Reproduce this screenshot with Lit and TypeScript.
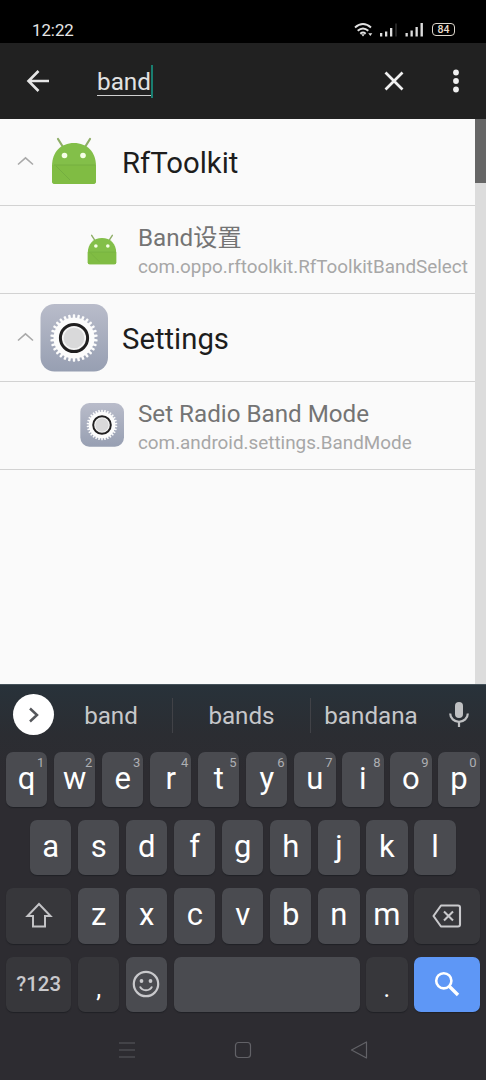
import { LitElement, html, svg, css } from "lit";
import { customElement, property } from "lit/decorators.js";

const robot = html`<svg viewBox="0 0 46 48" width="100%" height="100%">
  <g stroke="#8fae68" stroke-width="2.2" stroke-linecap="round">
    <path d="M7 2l5 8M39 2l-5 8" />
  </g>
  <path d="M1 29C1 15 10 6 23 6s22 9 22 23v15a3 3 0 0 1-3 3H4a3 3 0 0 1-3-3z" fill="#83bf49" />
  <path d="M1 28h44v16a3 3 0 0 1-3 3H4a3 3 0 0 1-3-3z" fill="#80bc43" />
  <path d="M3 28h41M5 29l14 14" stroke="#74ae40" stroke-width="1" fill="none" />
  <circle cx="13.5" cy="18.5" r="2.8" fill="#f6ffe6" />
  <circle cx="32" cy="18.5" r="2.8" fill="#f6ffe6" />
</svg>`;

const teeth = Array.from({ length: 30 }, (_, i) => i * 12);
const gear = html`<svg viewBox="0 0 68 68" width="100%" height="100%">
  <defs>
    <linearGradient id="g" x1="0" y1="0" x2="0" y2="1">
      <stop offset="0" stop-color="#b9bcca" />
      <stop offset="1" stop-color="#979fb2" />
    </linearGradient>
  </defs>
  <rect x=".5" width="67.5" height="67.500" rx="14" fill="url(#g)" />
  <circle cx="34" cy="34" r="20.500" fill="#fcfcfc" />
  ${teeth.map(
    (a) => svg`<rect x="32.8" y="10.3" width="2.4" height="5" rx=".8" fill="#fcfcfc" transform="rotate(${a} 34 34)" />`
  )}
  <circle cx="34" cy="34" r="13.6" fill="#f4f4f4" stroke="#201f20" stroke-width="3" />
  <circle cx="34" cy="34" r="10.3" fill="#d9d9da" />
</svg>`;

@customElement("result-row")
class ResultRow extends LitElement {
  @property() heading = "";
  @property() detail = "";
  @property() icon = "robot";

  static styles = css`
    :host { display: block; box-sizing: border-box; height: 88px; border-bottom: 1px solid #d2d2d2; }
    .row { height: 100%; display: flex; align-items: center; color: #1d1d1d; }
    .caret { width: 17px; height: 10px; margin-left: 17px; margin-right: 6px; margin-bottom: 2px; flex: none; }
    .pic { flex: none; display: flex; align-items: center; justify-content: center; }
    .pic.big { width: 68px; height: 68px; }
    .pic.small { width: 44px; height: 44px; margin-left: 80px; margin-bottom: 1px; }
    .robot { display: block; width: 46px; height: 48px; }
    .big .robot { margin-bottom: 3px; }
    .small .robot { width: 30px; height: 31px; margin-right: 0; }
    .gear { display: block; width: 100%; height: 100%; }
    .title { font-size: 29.300px; line-height: 34px; margin-left: 14px; padding-top: 2px; white-space: nowrap; }
    .texts { margin-left: 14px; padding-top: 7px; white-space: nowrap; }
    .name { font-size: 24.200px; line-height: 29px; height: 29px; color: #747474; }
    .sub { font-size: 18.850px; line-height: 29px; height: 29px; color: #a7a7a7; }
  `;

  render() {
    const pic = this.icon === "robot"
      ? html`<span class="robot">${robot}</span>`
      : html`<span class="gear">${gear}</span>`;
    return this.detail
      ? html`<div class="row">
          <div class="pic small">${pic}</div>
          <div class="texts"><div class="name">${this.heading}</div><div class="sub">${this.detail}</div></div>
        </div>`
      : html`<div class="row">
          <svg class="caret" viewBox="0 0 17 10"><path d="M1 8.5L8.5 1.8 16 8.5" fill="none" stroke="#a9a9a9" stroke-width="1.6" /></svg>
          <div class="pic big">${pic}</div>
          <div class="title">${this.heading}</div>
        </div>`;
  }
}

@customElement("soft-keyboard")
class SoftKeyboard extends LitElement {
  static styles = css`
    :host { display: block; height: 396px; background: linear-gradient(#28323a, #2b2d32 50px, #2d2c31 90px); color: #fff; }
    .strip { height: 61px; display: grid; grid-template-columns: 50px 122px 138px 121px 55px; align-items: center; border-top: 1px solid #45525a; box-sizing: border-box; }
    .more { width: 41px; height: 41px; border-radius: 50%; background: #fff; margin-left: 13px; margin-top: -1px; display: flex; align-items: center; justify-content: center; }
    .word { font-size: 24.2px; line-height: 34px; padding-top: 1px; text-align: center; color: #c6c7ca; }
    .word + .word { border-left: 1px solid #414247; }
    .mic { justify-self: center; margin-top: -2px; margin-left: 1px; display: block; }
    .keys { padding: 7px 6px 0; display: flex; flex-direction: column; gap: 13px; }
    .line { display: grid; grid-template-columns: repeat(20, 17.3px); column-gap: 6.73px; height: 55.2px; }
    .line.inset { padding-left: 24px; }
    .key { grid-column: span 2; position: relative; display: flex; align-items: center; justify-content: center; background: #4a4b50; border-radius: 7px; font-size: 31px; padding-bottom: 2px; box-shadow: 0 1px 1px #202126; }
    .dark { background: #37373b; }
    .w3 { grid-column: span 3; padding-bottom: 0; }
    .w8 { grid-column: span 8; }
    .hint { position: absolute; top: 3px; right: 3px; font-size: 13px; line-height: 15px; color: #aeafb3; }
    .sym { font-size: 20.4px; font-weight: 500; color: #c9c9cc; }
    .flat { padding: 0 2px 0 0; }
    .low { padding-top: 9px; padding-bottom: 0; font-size: 25px; }
    .go { background: #5e97f6; }
    .nav { height: 68px; margin-top: 4px; display: grid; grid-template-columns: 69px 116px 116px 116px 69px; align-items: center; justify-items: center; }
    .nav svg { display: block; }
    .nav svg:first-child { grid-column: 2; }
  `;

  key(c: string, hint = "") {
    return html`<div class="key">${c}${hint ? html`<span class="hint">${hint}</span>` : ""}</div>`;
  }

  render() {
    return html`
      <div class="strip">
        <div class="more"><svg width="12" height="16" viewBox="0 0 12 16"><path d="M2 1.5L9 8l-7 6.5" fill="none" stroke="#55575b" stroke-width="2.5" /></svg></div>
        <div class="word">band</div>
        <div class="word">bands</div>
        <div class="word">bandana</div>
        <svg class="mic" width="20" height="27" viewBox="0 0 20 27"><rect x="6" y="1" width="8" height="16" rx="4" fill="#bfc0c2" /><path d="M1.2 12.5a8.8 8.3 0 0 0 17.6 0M10 21v5" fill="none" stroke="#bfc0c2" stroke-width="2.2" /></svg>
      </div>
      <div class="keys">
        <div class="line">${[..."qwertyuiop"].map((c, i) => this.key(c, String((i + 1) % 10)))}</div>
        <div class="line inset">${[..."asdfghjkl"].map((c) => this.key(c))}</div>
        <div class="line">
          <div class="key dark w3"><svg width="28" height="27" viewBox="0 0 28 27"><path d="M14 2L2.5 14H8v10.500h12V14h5.500z" fill="none" stroke="#c3c3c6" stroke-width="2" /></svg></div>
          ${[..."zxcvbnm"].map((c) => this.key(c))}
          <div class="key dark w3"><svg width="30" height="24" viewBox="0 0 30 24"><path d="M9 1.500h17a2 2 0 0 1 2 2v17a2 2 0 0 1-2 2H9L1.500 12z" fill="none" stroke="#c9c9cc" stroke-width="2.100" stroke-linejoin="round" /><path d="M12 7.500l9 9M21 7.500l-9 9" stroke="#c9c9cc" stroke-width="2.100" /></svg></div>
        </div>
        <div class="line">
          <div class="key dark w3 sym">?123</div>
          <div class="key dark low">,</div>
          <div class="key flat"><svg width="28" height="28" viewBox="0 0 28 28"><circle cx="14" cy="14" r="12.200" fill="none" stroke="#c9c9cc" stroke-width="2.200" /><circle cx="9.500" cy="11" r="1.900" fill="#c9c9cc" /><circle cx="18.500" cy="11" r="1.900" fill="#c9c9cc" /><path d="M8 16.500c2 5 10 5 12 0" fill="none" stroke="#c9c9cc" stroke-width="2" /></svg></div>
          <div class="key w8"></div>
          <div class="key dark low">.</div>
          <div class="key go w3"><svg width="26" height="26" viewBox="0 0 26 26"><circle cx="9.800" cy="9.800" r="7.600" fill="none" stroke="#fff" stroke-width="2.600" /><path d="M15 15l9 9" stroke="#fff" stroke-width="3.400" /></svg></div>
        </div>
      </div>
      <div class="nav">
        <svg width="18" height="18" viewBox="0 0 18 18"><path d="M1 2h16M1 9h16M1 16h16" stroke="#5b5b60" stroke-width="1.100" /></svg>
        <svg width="18" height="18" viewBox="0 0 18 18"><rect x="1.500" y="1.500" width="15" height="15" rx="3" fill="none" stroke="#626267" stroke-width="1.200" /></svg>
        <svg width="18" height="20" viewBox="0 0 18 20"><path d="M16.500 2v16L1.500 10z" fill="none" stroke="#626267" stroke-width="1.200" stroke-linejoin="round" /></svg>
      </div>`;
  }
}

@customElement("app-root")
class AppRoot extends LitElement {
  static styles = css`
    :host { display: flex; flex-direction: column; width: 486px; height: 1080px; overflow: hidden; background: #fafafa; font-family: Roboto, "Noto Sans CJK SC", sans-serif; }
    .status { height: 43px; flex: none; background: #000; color: #e6e6e6; display: flex; align-items: center; padding: 16px 31px 0 32px; box-sizing: border-box; font-size: 16.8px; line-height: 26px; }
    .status .time { flex: 1; }
    .status svg { display: block; }
    .battery { width: 23px; height: 13px; box-sizing: border-box; border: 1.500px solid #ddd6cc; border-radius: 4px; font-size: 10.500px; line-height: 11px; text-align: center; color: #e9dccb; font-weight: 500; margin-left: 6px; }
    .bar { height: 76px; flex: none; background: #212121; display: flex; align-items: center; color: #e2e2e2; }
    .back { margin-left: 26px; }
    .query { margin-left: 22px; flex: 1; display: flex; align-items: center; }
    .text { font-size: 24.300px; line-height: 26px; height: 26px; border-bottom: 1px solid #cfcfcf; margin-left: 25px; margin-top: 3px; }
    .cursor { width: 2px; height: 33px; background: #197e70; }
    .menu { margin: 0 26px 0 48px; }
    .body { flex: 1; min-height: 0; display: flex; background: #fafafa; }
    .list { flex: 1; min-width: 0; }
    .list result-row:first-child { height: 87px; }
    .track { width: 11px; background: #dcdcdc; }
    .thumb { height: 64px; background: #666; }
    soft-keyboard { flex: none; }
  `;

  render() {
    return html`
      <div class="status">
        <span class="time">12:22</span>
        <svg width="72" height="16" viewBox="0 0 72 16">
          <g fill="none" stroke="#e2e2e2" stroke-width="1.900"><path d="M1 5.500q8-7 16 0M3.700 8.800q5.300-4.800 10.600 0M6.300 11.700q2.700-2.300 5.400 0" /></g>
          <path d="M7.200 12.200h3.600L9 14.500zM14.300 11.200h4L16.300 14z" fill="#e2e2e2" />
          <g fill="#dcdcdc"><rect x="26" y="11" width="2.300" height="3.500" /><rect x="31" y="9.500" width="2.300" height="5" /><rect x="36" y="6" width="2.300" height="8.500" /><rect x="51.500" y="11" width="2.300" height="3.500" /><rect x="56.500" y="8.500" width="2.300" height="6" /><rect x="61.500" y="5" width="2.300" height="9.500" /><rect x="66.500" y="1" width="2.400" height="13.500" /></g>
          <rect x="41" y="1.500" width="2" height="13" fill="#252525" />
        </svg>
        <span class="battery">84</span>
      </div>
      <div class="bar">
        <svg class="back" width="24" height="24" viewBox="0 0 24 24"><path d="M23 12H3M12.500 2L2.500 12l10 10" fill="none" stroke="#e6e6e6" stroke-width="2.600" /></svg>
        <div class="query"><span class="text">band</span><span class="cursor"></span></div>
        <svg width="20" height="20" viewBox="0 0 20 20"><path d="M1.500 1.500l17 17M18.500 1.500l-17 17" stroke="#f0f0f0" stroke-width="2.700" /></svg>
        <svg class="menu" width="8" height="24" viewBox="0 0 8 24"><g fill="#efefef"><circle cx="4" cy="3.500" r="2.900" /><circle cx="4" cy="12" r="2.900" /><circle cx="4" cy="20.500" r="2.900" /></g></svg>
      </div>
      <div class="body">
        <div class="list">
          <result-row heading="RfToolkit" icon="robot"></result-row>
          <result-row heading="Band设置" detail="com.oppo.rftoolkit.RfToolkitBandSelect" icon="robot"></result-row>
          <result-row heading="Settings" icon="gear"></result-row>
          <result-row heading="Set Radio Band Mode" detail="com.android.settings.BandMode" icon="gear"></result-row>
        </div>
        <div class="track"><div class="thumb"></div></div>
      </div>
      <soft-keyboard></soft-keyboard>`;
  }
}
